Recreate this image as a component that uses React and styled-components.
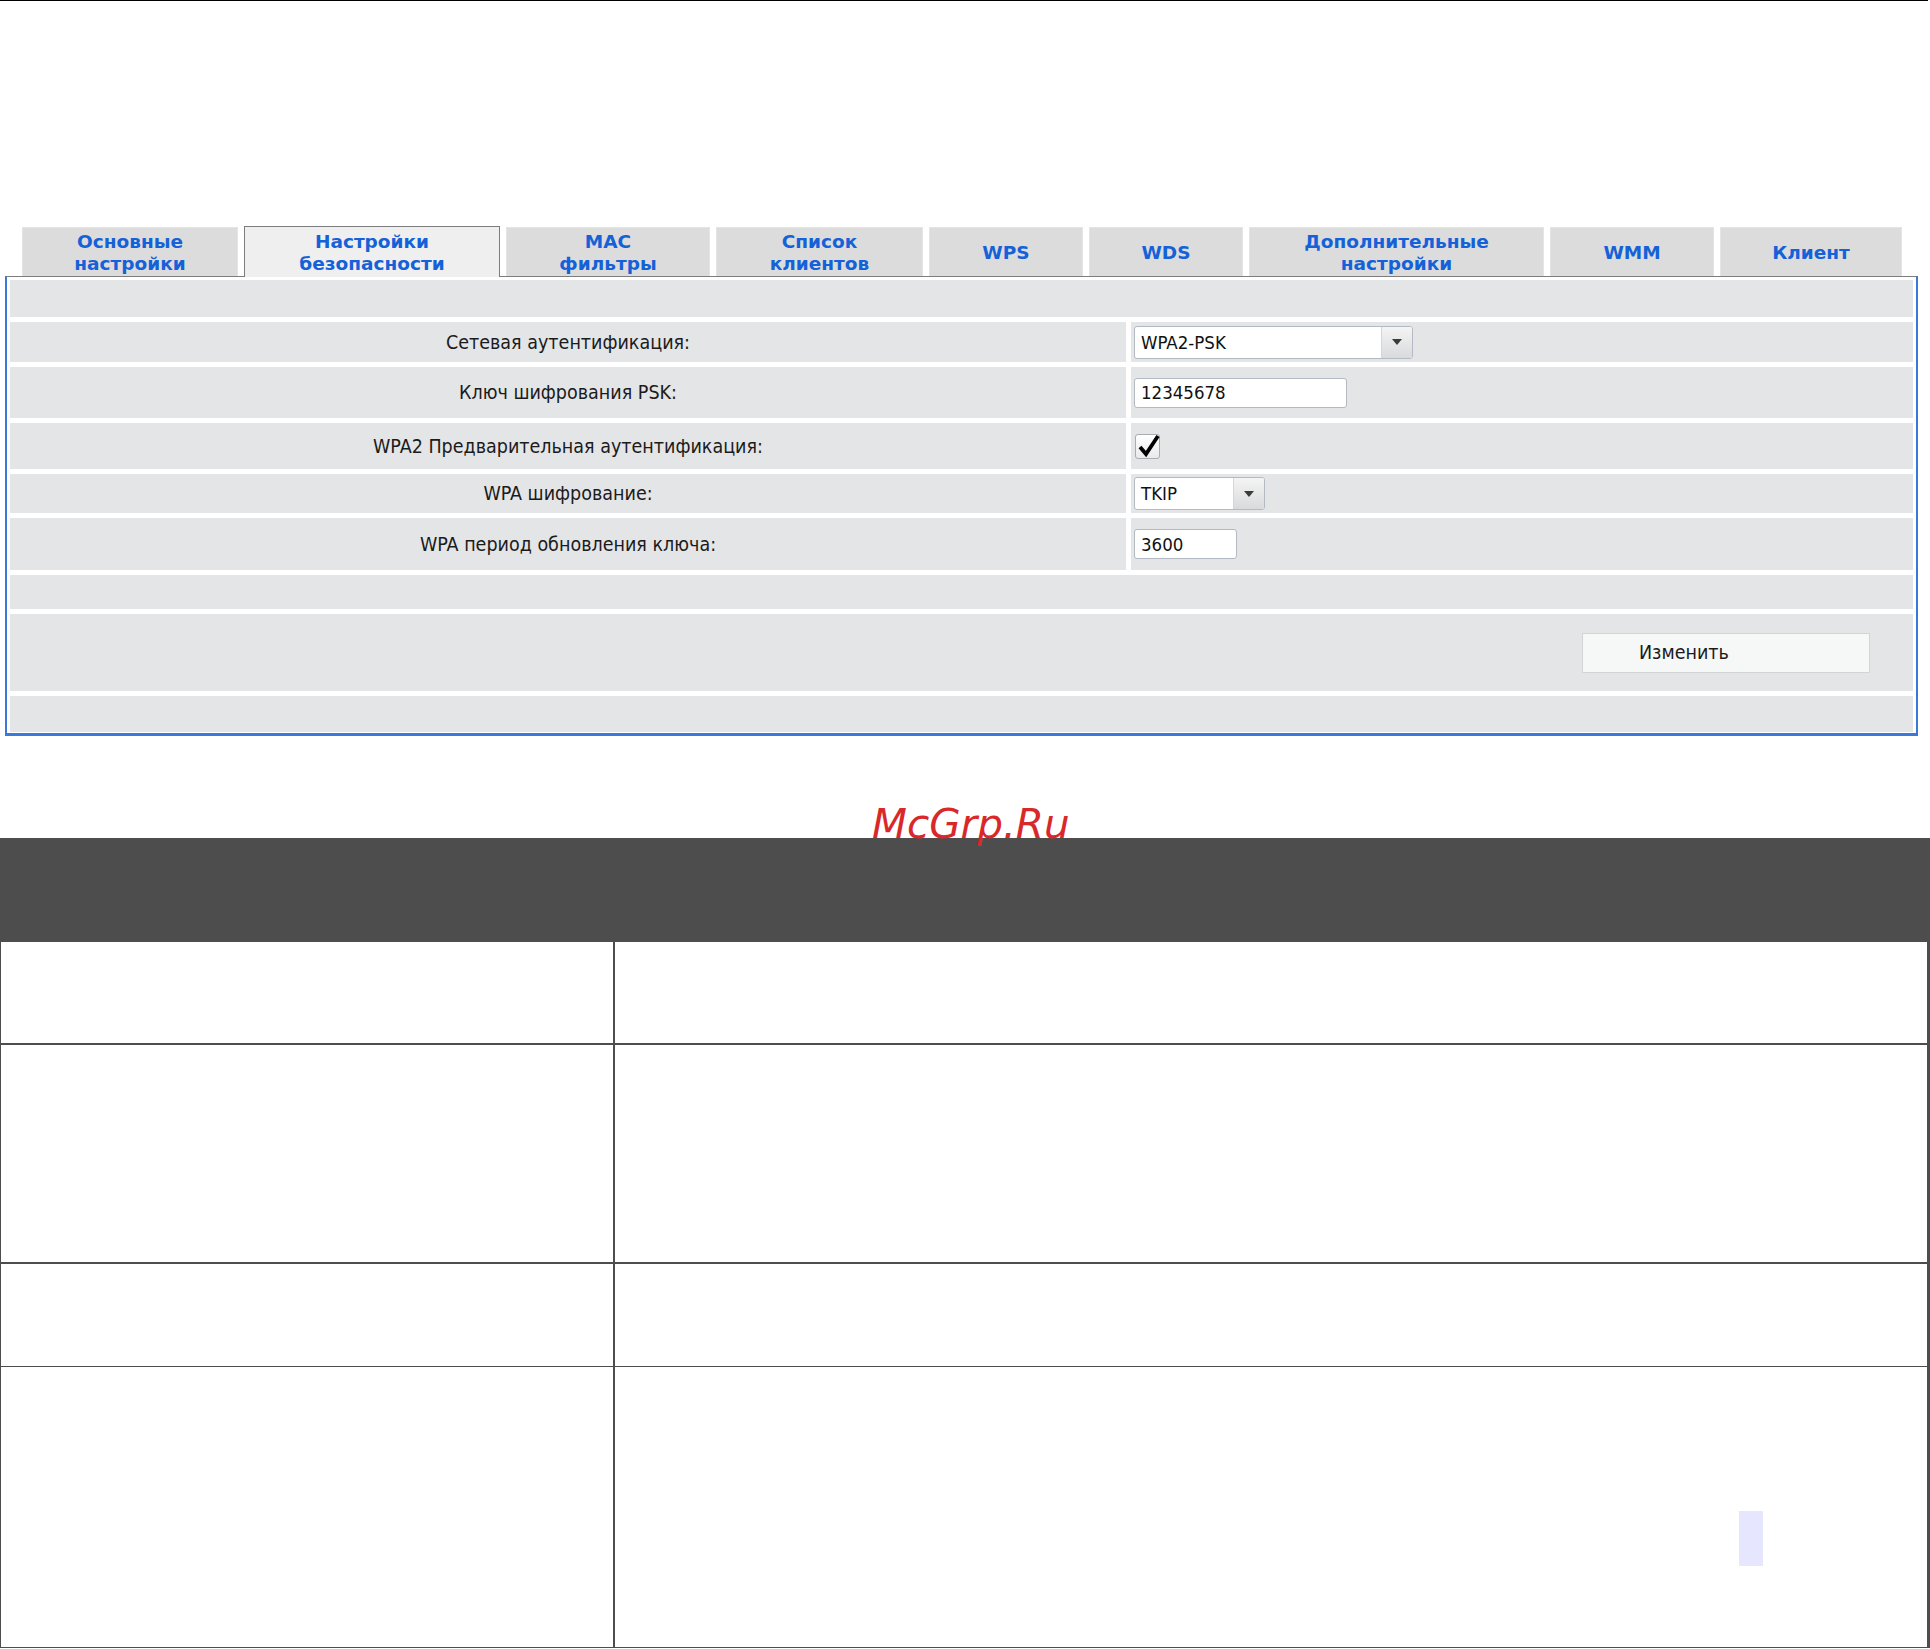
import React from 'react';
import styled, { createGlobalStyle } from 'styled-components';

const GlobalStyle = createGlobalStyle`
  html, body {
    margin: 0;
    padding: 0;
    background: #fff;
    overflow: hidden;
  }
  body {
    font-family: "DejaVu Sans Condensed", "DejaVu Sans", sans-serif;
  }
`;

const Page = styled.div`
  width: 1930px;
  height: 1649px;
  display: flex;
  flex-direction: column;
`;

const TopRule = styled.div`
  width: 1928px;
  height: 1px;
  background: #000;
  margin-bottom: 225px;
`;

const TabStrip = styled.div`
  display: flex;
  align-items: flex-end;
  gap: 6px;
  padding-left: 22px;
  height: 50px;
`;

const Tab = styled.div`
  position: relative;
  z-index: ${(p) => (p.$active ? 2 : 1)};
  width: ${(p) => p.$w}px;
  height: ${(p) => (p.$active ? 51 : 49)}px;
  margin-bottom: ${(p) => (p.$active ? -1 : 0)}px;
  box-sizing: border-box;
  background: ${(p) => (p.$active ? '#efefef' : '#dcdcdc')};
  border: ${(p) => (p.$active ? '1px solid #7d7d7d' : '1px solid #e4e4e4')};
  border-bottom: none;
  display: flex;
  align-items: center;
  justify-content: center;
  text-align: center;
  color: #1461d8;
  font-family: "DejaVu Sans", sans-serif;
  font-weight: bold;
  font-size: 18.5px;
  line-height: 22px;
  padding-top: 2px;
`;

const Panel = styled.div`
  margin-left: 5px;
  width: 1913px;
  box-sizing: border-box;
  border: 2px solid #3b79d9;
  border-top: 1px solid #7d7d7d;
  border-bottom-width: 3px;
  padding: 3px 3px 1px 3px;
  display: flex;
  flex-direction: column;
  gap: 5px;
  background: #fff;
`;

const Row = styled.div`
  display: grid;
  grid-template-columns: ${(p) => (p.$full ? '1fr' : '1116px 1fr')};
  gap: 5px;
  height: ${(p) => p.$h}px;
`;

const LabelCell = styled.div`
  background: #e4e5e7;
  display: flex;
  align-items: center;
  justify-content: center;
  font-size: 19.5px;
  color: #1b1b1b;
`;

const ValueCell = styled.div`
  background: #e4e5e7;
  display: flex;
  align-items: center;
  justify-content: ${(p) => (p.$right ? 'flex-end' : 'flex-start')};
  padding-left: ${(p) => (p.$right ? 0 : 3)}px;
  padding-right: ${(p) => (p.$right ? 43 : 0)}px;
`;

const Select = styled.div`
  width: ${(p) => p.$w}px;
  height: 33px;
  box-sizing: border-box;
  border: 1px solid #b3bac4;
  border-radius: 3px;
  background: #fff;
  display: flex;
  overflow: hidden;
`;

const SelectValue = styled.div`
  flex: 1;
  display: flex;
  align-items: center;
  padding-left: 6px;
  font-size: 18.5px;
  color: #111;
`;

const SelectArrow = styled.div`
  width: 30px;
  border-left: 1px solid #d3d6da;
  background: linear-gradient(#f4f4f4, #d9dadc);
  display: flex;
  align-items: center;
  justify-content: center;

  &::after {
    content: '';
    border-left: 5px solid transparent;
    border-right: 5px solid transparent;
    border-top: 6px solid #3a3a3a;
  }
`;

const TextInput = styled.input`
  width: ${(p) => p.$w}px;
  height: 30px;
  box-sizing: border-box;
  border: 1px solid #b3bac4;
  border-radius: 3px;
  background: #fff;
  padding: 0 0 0 6px;
  margin: 0;
  font-family: "DejaVu Sans Condensed", "DejaVu Sans", sans-serif;
  font-size: 18.5px;
  color: #111;
  outline: none;
`;

const CheckBox = styled.div`
  width: 25px;
  height: 25px;
  margin-left: 1px;
  box-sizing: border-box;
  border: 1px solid #a9adb3;
  border-radius: 3px;
  background: linear-gradient(#ffffff, #e9eaec);
  position: relative;

  svg {
    position: absolute;
    left: 1px;
    top: -4px;
  }
`;

const Button = styled.button`
  width: 288px;
  height: 40px;
  box-sizing: border-box;
  border: 1px solid #d2d4d6;
  background: #f6f7f7;
  text-align: left;
  padding: 0 0 0 56px;
  font-family: "DejaVu Sans Condensed", "DejaVu Sans", sans-serif;
  font-size: 19.5px;
  color: #1b1b1b;
`;

const Gap = styled.div`
  height: 102px;
`;

const BarWrap = styled.div`
  position: relative;
`;

const DarkBar = styled.div`
  height: 104px;
  background: #4d4d4d;
`;

const Watermark = styled.div`
  position: absolute;
  left: 872px;
  top: -34px;
  font-family: "DejaVu Sans", sans-serif;
  font-style: italic;
  font-size: 40.5px;
  line-height: 40px;
  color: #d9282a;
`;

const Table = styled.div`
  width: 1930px;
  box-sizing: border-box;
  border-left: 1px solid #4d4d4d;
  border-right: 3px solid #4d4d4d;
  border-bottom: 1px solid #4d4d4d;
`;

const TRow = styled.div`
  display: grid;
  grid-template-columns: 614px 1fr;
  height: ${(p) => p.$h}px;
  box-sizing: border-box;
  border-bottom: ${(p) => p.$line}px solid #4d4d4d;
`;

const TCell = styled.div`
  position: relative;
  border-right: ${(p) => (p.$first ? '2px solid #4d4d4d' : 'none')};
`;

const Highlight = styled.div`
  position: absolute;
  left: 1124px;
  top: 144px;
  width: 24px;
  height: 55px;
  background: #e6e6fe;
`;

const tabs = [
  { w: 216, t: ['Основные', 'настройки'] },
  { w: 256, t: ['Настройки', 'безопасности'], active: true },
  { w: 204, t: ['MAC', 'фильтры'] },
  { w: 207, t: ['Список', 'клиентов'] },
  { w: 154, t: ['WPS'] },
  { w: 154, t: ['WDS'] },
  { w: 295, t: ['Дополнительные', 'настройки'] },
  { w: 164, t: ['WMM'] },
  { w: 182, t: ['Клиент'] },
];

const CheckMark = () => (
  <svg width="24" height="28" viewBox="0 0 24 28">
    <path d="M3 16 L9 23 L21 5" fill="none" stroke="#000" strokeWidth="3.8" />
  </svg>
);

const App = () => {
  return (
    <Page>
      <GlobalStyle />
      <TopRule />
      <TabStrip>
        {tabs.map((tab) => (
          <Tab key={tab.t.join(' ')} $w={tab.w} $active={tab.active}>
            <div>
              {tab.t.map((line) => (
                <div key={line}>{line}</div>
              ))}
            </div>
          </Tab>
        ))}
      </TabStrip>
      <Panel>
        <Row $full $h={37}>
          <ValueCell />
        </Row>
        <Row $h={40}>
          <LabelCell>Сетевая аутентификация:</LabelCell>
          <ValueCell>
            <Select $w={279}>
              <SelectValue>WPA2-PSK</SelectValue>
              <SelectArrow />
            </Select>
          </ValueCell>
        </Row>
        <Row $h={51}>
          <LabelCell>Ключ шифрования PSK:</LabelCell>
          <ValueCell>
            <TextInput $w={213} value="12345678" readOnly />
          </ValueCell>
        </Row>
        <Row $h={46}>
          <LabelCell>WPA2 Предварительная аутентификация:</LabelCell>
          <ValueCell>
            <CheckBox>
              <CheckMark />
            </CheckBox>
          </ValueCell>
        </Row>
        <Row $h={39}>
          <LabelCell>WPA шифрование:</LabelCell>
          <ValueCell>
            <Select $w={131}>
              <SelectValue>TKIP</SelectValue>
              <SelectArrow />
            </Select>
          </ValueCell>
        </Row>
        <Row $h={52}>
          <LabelCell>WPA период обновления ключа:</LabelCell>
          <ValueCell>
            <TextInput $w={103} value="3600" readOnly />
          </ValueCell>
        </Row>
        <Row $full $h={34}>
          <ValueCell />
        </Row>
        <Row $full $h={77}>
          <ValueCell $right>
            <Button>Изменить</Button>
          </ValueCell>
        </Row>
        <Row $full $h={36}>
          <ValueCell />
        </Row>
      </Panel>
      <Gap />
      <BarWrap>
        <DarkBar />
        <Watermark>McGrp.Ru</Watermark>
      </BarWrap>
      <Table>
        <TRow $h={103} $line={2}>
          <TCell $first />
          <TCell />
        </TRow>
        <TRow $h={219} $line={2}>
          <TCell $first />
          <TCell />
        </TRow>
        <TRow $h={103} $line={1}>
          <TCell $first />
          <TCell />
        </TRow>
        <TRow $h={280} $line={0}>
          <TCell $first />
          <TCell>
            <Highlight />
          </TCell>
        </TRow>
      </Table>
    </Page>
  );
};

export default App;
